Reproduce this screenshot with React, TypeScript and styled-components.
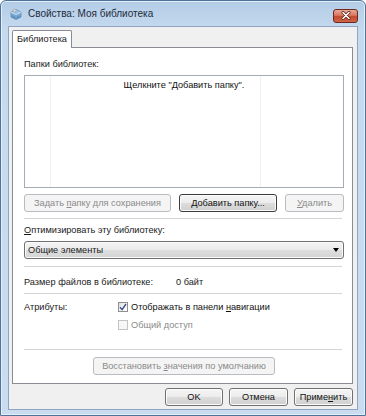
import { createGlobalStyle, styled } from "styled-components";

const GlobalStyle = createGlobalStyle`
  html, body {
    margin: 0;
    padding: 0;
    background: #ffffff;
  }
  body {
    font-family: "Liberation Sans", Arial, sans-serif;
    font-size: 9.2px;
    color: #1a1a1a;
  }
`;

const Window = styled.div`
  width: 366px;
  height: 416px;
  box-sizing: border-box;
  display: flex;
  flex-direction: column;
  border: 1px solid #50739a;
  border-radius: 6px 6px 0 0;
  background: linear-gradient(to bottom, #b3cce6 0px, #c6daef 30px, #c9dcf0 100%);
  box-shadow: inset 0 0 0 1px #e4eef8;
`;

const TitleBar = styled.div`
  height: 25px;
  display: flex;
  align-items: center;
  padding: 0 7px 0 8px;
  gap: 5px;
`;

const Title = styled.span`
  font-size: 10px;
  color: #1e2c3c;
  flex: 1;
`;

const CloseButton = styled.div`
  width: 25px;
  height: 14px;
  margin-top: 4px;
  box-sizing: border-box;
  border: 1px solid #6b2a1c;
  border-radius: 3px;
  background: linear-gradient(to bottom, #eaa898 0%, #d9765f 45%, #c24a2d 55%, #d0654a 100%);
  display: flex;
  align-items: center;
  justify-content: center;
`;

const Client = styled.div`
  flex: 1;
  margin: 0 7px 5px 7px;
  background: #f0f0f0;
  border: 1px solid #8ea4c0;
  display: flex;
  flex-direction: column;
  padding: 3px 4px 0 3px;
`;

const TabStrip = styled.div`
  display: flex;
  height: 17px;
  position: relative;
  z-index: 1;
`;

const Tab = styled.div`
  box-sizing: border-box;
  height: 18px;
  padding: 3px 4px 0 4px;
  border: 1px solid #898c95;
  border-bottom: none;
  border-radius: 2px 2px 0 0;
  background: #ffffff;
`;

const Panel = styled.div`
  height: 337px;
  box-sizing: border-box;
  border: 1px solid #898c95;
  background: #ffffff;
  padding: 6px 8px 0 11px;
  display: flex;
  flex-direction: column;
`;

const Label = styled.div<{ $top?: number }>`
  margin-top: ${(p) => p.$top ?? 0}px;
  line-height: 12px;
`;

const ListBox = styled.div`
  margin-top: 5px;
  height: 113px;
  box-sizing: border-box;
  border: 1px solid #a5acb5;
  background-color: #ffffff;
  background-image: linear-gradient(
    to right,
    transparent 25px,
    #f1f1f1 25px,
    #f1f1f1 26px,
    transparent 26px,
    transparent 235px,
    #f1f1f1 235px,
    #f1f1f1 236px,
    transparent 236px
  );
  text-align: center;
  padding-top: 4px;
  color: #111;
`;

const ButtonRow = styled.div<{ $justify?: string; $top?: number }>`
  display: flex;
  justify-content: ${(p) => p.$justify ?? "space-between"};
  gap: 7px;
  margin-top: ${(p) => p.$top ?? 0}px;
`;

const Button = styled.button<{ $width: number; $disabled?: boolean; $default?: boolean }>`
  width: ${(p) => p.$width}px;
  height: 18px;
  padding: 0;
  font-family: inherit;
  font-size: 9.2px;
  border-radius: 3px;
  border: 1px solid
    ${(p) => (p.$disabled ? "#b8bcc0" : p.$default ? "#3c3c3c" : "#707070")};
  color: ${(p) => (p.$disabled ? "#8a8a8a" : "#111")};
  background: ${(p) =>
    p.$disabled
      ? "#f4f4f4"
      : "linear-gradient(to bottom, #f5f5f5 0%, #ececec 48%, #dcdcdc 52%, #d0d0d0 100%)"};
  box-shadow: ${(p) => (p.$disabled ? "none" : "inset 0 0 0 1px #fcfcfc")};
`;

const Key = styled.span`
  text-decoration: underline;
`;

const Separator = styled.div<{ $top: number }>`
  height: 1px;
  background: #d5d5d5;
  margin: ${(p) => p.$top}px 2px 0 0;
`;

const Combo = styled.div`
  margin-top: 5px;
  height: 18px;
  box-sizing: border-box;
  border: 1px solid #707070;
  border-radius: 3px;
  background: linear-gradient(to bottom, #f4f4f4 0%, #ebebeb 48%, #dedede 52%, #d4d4d4 100%);
  box-shadow: inset 0 0 0 1px #fbfbfb;
  display: flex;
  align-items: center;
  justify-content: space-between;
  padding: 0 4px 0 3px;
`;

const Arrow = styled.span`
  width: 0;
  height: 0;
  border-left: 3.5px solid transparent;
  border-right: 3.5px solid transparent;
  border-top: 4px solid #000;
`;

const InfoRow = styled.div<{ $labelWidth: number; $top: number }>`
  display: grid;
  grid-template-columns: ${(p) => p.$labelWidth}px 1fr;
  align-items: center;
  margin-top: ${(p) => p.$top}px;
  line-height: 12px;
`;

const CheckLine = styled.div<{ $disabled?: boolean }>`
  display: flex;
  align-items: center;
  gap: 3px;
  color: ${(p) => (p.$disabled ? "#8a8a8a" : "#111")};
`;

const Box = styled.span<{ $disabled?: boolean }>`
  width: 10px;
  height: 10px;
  box-sizing: border-box;
  border: 1px solid ${(p) => (p.$disabled ? "#c4c4c4" : "#8e8f8f")};
  background: ${(p) =>
    p.$disabled ? "#f7f7f7" : "linear-gradient(135deg, #dcdcdc 0%, #f8f8f8 60%, #ffffff 100%)"};
  display: flex;
  align-items: center;
  justify-content: center;
`;

const Footer = styled.div`
  display: flex;
  justify-content: flex-end;
  gap: 6px;
  margin-top: 4px;
`;

const LibraryIcon = () => (
  <svg width="14" height="14" viewBox="0 0 14 14">
    <defs>
      <linearGradient id="lib" x1="0" y1="0" x2="0" y2="1">
        <stop offset="0" stopColor="#b9d9f2" />
        <stop offset="1" stopColor="#3f7fb8" />
      </linearGradient>
    </defs>
    <path d="M2 5 L7 2.5 L12 5 L12 10 L7 12.5 L2 10 Z" fill="url(#lib)" stroke="#51789c" strokeWidth="0.6" />
    <path d="M2 5 L7 7.5 L12 5" fill="none" stroke="#e7f2fb" strokeWidth="0.8" />
    <path d="M7 7.5 L7 12.5" stroke="#9cc3e3" strokeWidth="0.6" />
    <circle cx="5.5" cy="3.6" r="1.6" fill="#d6d6d6" stroke="#8b8b8b" strokeWidth="0.4" />
  </svg>
);

const CloseGlyph = () => (
  <svg width="10" height="9" viewBox="0 0 10 9">
    <path d="M2 1.5 L8 7.5 M8 1.5 L2 7.5" stroke="#5a2014" strokeWidth="3" strokeLinecap="round" />
    <path d="M2 1.5 L8 7.5 M8 1.5 L2 7.5" stroke="#ffffff" strokeWidth="1.6" strokeLinecap="round" />
  </svg>
);

const CheckMark = () => (
  <svg width="8" height="8" viewBox="0 0 8 8">
    <path d="M1 4.2 L3.1 6.6 L7 1" fill="none" stroke="#3d4f8a" strokeWidth="1.4" />
  </svg>
);

const App = () => {
  return (
    <>
      <GlobalStyle />
      <Window>
        <TitleBar>
          <LibraryIcon />
          <Title>Свойства: Моя библиотека</Title>
          <CloseButton>
            <CloseGlyph />
          </CloseButton>
        </TitleBar>
        <Client>
          <TabStrip>
            <Tab>Библиотека</Tab>
          </TabStrip>
          <Panel>
            <Label $top={4}>Папки библиотек:</Label>
            <ListBox>Щелкните "Добавить папку".</ListBox>
            <ButtonRow $top={6}>
              <Button $width={147} $disabled>
                Задать <Key>п</Key>апку для сохранения
              </Button>
              <Button $width={98} $default>
                <Key>Д</Key>обавить папку...
              </Button>
              <Button $width={59} $disabled>
                <Key>У</Key>далить
              </Button>
            </ButtonRow>
            <Separator $top={6} />
            <Label $top={5}>
              <Key>О</Key>птимизировать эту библиотеку:
            </Label>
            <Combo>
              <span>Общие элементы</span>
              <Arrow />
            </Combo>
            <Separator $top={7} />
            <InfoRow $labelWidth={152} $top={9}>
              <span>Размер файлов в библиотеке:</span>
              <span>0 байт</span>
            </InfoRow>
            <Separator $top={5} />
            <InfoRow $labelWidth={94} $top={7}>
              <span>Атрибуты:</span>
              <CheckLine>
                <Box>
                  <CheckMark />
                </Box>
                <span>
                  Отображать в панели <Key>н</Key>авигации
                </span>
              </CheckLine>
            </InfoRow>
            <InfoRow $labelWidth={94} $top={6}>
              <span />
              <CheckLine $disabled>
                <Box $disabled />
                <span>Общий доступ</span>
              </CheckLine>
            </InfoRow>
            <Separator $top={18} />
            <ButtonRow $justify="center" $top={7}>
              <Button $width={182} $disabled>
                Восстановить <Key>з</Key>начения по умолчанию
              </Button>
            </ButtonRow>
          </Panel>
          <Footer>
            <Button $width={58}>OK</Button>
            <Button $width={59}>Отмена</Button>
            <Button $width={59}>
              Приме<Key>н</Key>ить
            </Button>
          </Footer>
        </Client>
      </Window>
    </>
  );
};

export default App;
